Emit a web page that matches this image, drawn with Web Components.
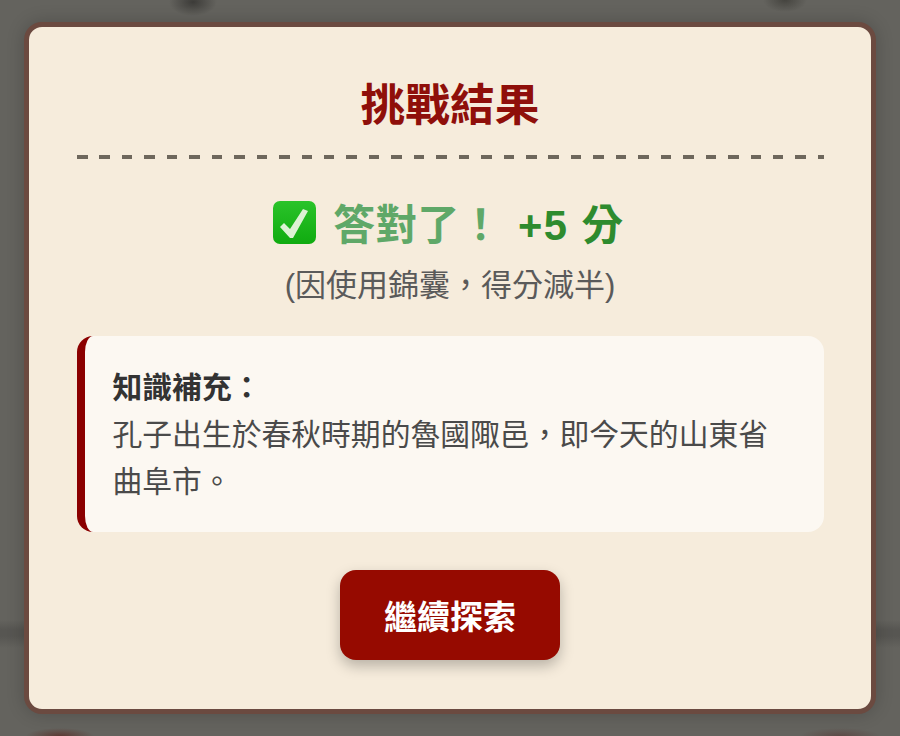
<!DOCTYPE html>
<html lang="zh-Hant">
<head>
<meta charset="utf-8">
<title>挑戰結果</title>
<style>
  html, body { margin: 0; height: 100%; }
  body { background: #63625d; overflow: hidden; }
</style>
</head>
<body>
<result-overlay>
  <result-card heading="挑戰結果">
    <result-score points="+5 分" note="(因使用錦囊，得分減半)">答對了！</result-score>
    <fact-box label="知識補充：">孔子出生於春秋時期的魯國陬邑，即今天的山東省曲阜市。</fact-box>
    <action-button>繼續探索</action-button>
  </result-card>
</result-overlay>

<script>
const FONT = `"Liberation Sans", "Noto Sans CJK TC", sans-serif`;

class ResultOverlay extends HTMLElement {
  connectedCallback() {
    this.attachShadow({ mode: 'open' });
    this.shadowRoot.innerHTML = `
      <style>
        :host {
          display: flex;
          height: 736px;
          box-sizing: border-box;
          padding: 22px 24px;
          font-family: ${FONT};
          background:
            radial-gradient(ellipse 24px 14px at 193px 2px, #3c3b38, transparent),
            radial-gradient(ellipse 22px 12px at 785px 0, #45443f, transparent),
            radial-gradient(ellipse 34px 8px at 60px 736px, #5c3a34, transparent),
            radial-gradient(ellipse 40px 8px at 840px 736px, #5c4a46, transparent),
            linear-gradient(#0000 620px, #575652 630px, #575652 636px, #0000 648px),
            #64635e;
        }
      </style>
      <slot></slot>
    `;
  }
}

class ResultCard extends HTMLElement {
  connectedCallback() {
    this.attachShadow({ mode: 'open' });
    this.shadowRoot.innerHTML = `
      <style>
        :host {
          display: block;
          flex: 1;
          height: 692px;
          box-sizing: border-box;
          background: #f6ecdc;
          border: 5px solid #6b4a40;
          border-radius: 18px;
          padding: 52px 47.5px 0;
          text-align: center;
          box-shadow: 0 0 18px rgba(0, 0, 0, .2);
        }
        h2 {
          margin: 0 0 33px;
          padding-bottom: 26px;
          font-size: 44.7px;
          line-height: 54px;
          font-weight: 700;
          color: #8f0f0a;
          background: repeating-linear-gradient(90deg, #6e675c 0 10.5px, transparent 10.5px 22.45px) bottom / 100% 4px no-repeat;
        }
      </style>
      <h2>${this.getAttribute('heading')}</h2>
      <slot></slot>
    `;
  }
}

class ResultScore extends HTMLElement {
  connectedCallback() {
    this.attachShadow({ mode: 'open' });
    this.shadowRoot.innerHTML = `
      <style>
        :host { display: block; }
        .line {
          display: flex;
          justify-content: center;
          align-items: center;
          gap: 16px;
          height: 60px;
          padding-right: 3px;
          font-size: 41.7px;
          font-weight: 700;
          color: #5fa868;
        }
        svg { width: 45px; height: 45px; flex: none; }
        .txt { letter-spacing: .5px; }
        .pts { color: #2e8b2e; letter-spacing: 1.5px; }
        p {
          margin: 14px 0 30px;
          font-size: 31px;
          line-height: 40px;
          color: #5a5a5a;
        }
      </style>
      <div class="line">
        <svg viewBox="0 0 45 45">
          <defs>
            <linearGradient id="g" x1="0" y1="0" x2="0" y2="1">
              <stop offset="0" stop-color="#2ac32a"/>
              <stop offset="1" stop-color="#10ab10"/>
            </linearGradient>
          </defs>
          <rect x="1" y="1" width="43" height="43" rx="7" fill="url(#g)"/>
          <path d="M8 27l4-4 6 6L31 9l5 2-15 27h-3z" fill="#dcf2d4"/>
        </svg>
        <span class="txt"><slot></slot></span>
        <span class="pts">${this.getAttribute('points')}</span>
      </div>
      <p>${this.getAttribute('note')}</p>
    `;
  }
}

class FactBox extends HTMLElement {
  connectedCallback() {
    this.attachShadow({ mode: 'open' });
    this.shadowRoot.innerHTML = `
      <style>
        :host {
          display: block;
          box-sizing: border-box;
          height: 196px;
          padding: 28px 28px 0 28px;
          background: #fcf8f2;
          border-left: 8px solid #8b0000;
          border-radius: 16px;
          text-align: left;
          font-size: 29.8px;
          line-height: 47px;
          color: #4a4a4a;
        }
        strong { display: block; color: #333; }
      </style>
      <strong>${this.getAttribute('label')}</strong>
      <slot></slot>
    `;
  }
}

class ActionButton extends HTMLElement {
  connectedCallback() {
    this.attachShadow({ mode: 'open' });
    this.shadowRoot.innerHTML = `
      <style>
        :host { display: block; margin-top: 38px; }
        button {
          width: 220px;
          height: 90px;
          border: 0;
          border-radius: 16px;
          background: #960a00;
          color: #fff;
          font: 700 33px ${FONT};
          box-shadow: 0 6px 14px rgba(0, 0, 0, .25);
        }
      </style>
      <button><slot></slot></button>
    `;
  }
}

customElements.define('result-overlay', ResultOverlay);
customElements.define('result-card', ResultCard);
customElements.define('result-score', ResultScore);
customElements.define('fact-box', FactBox);
customElements.define('action-button', ActionButton);
</script>
</body>
</html>
